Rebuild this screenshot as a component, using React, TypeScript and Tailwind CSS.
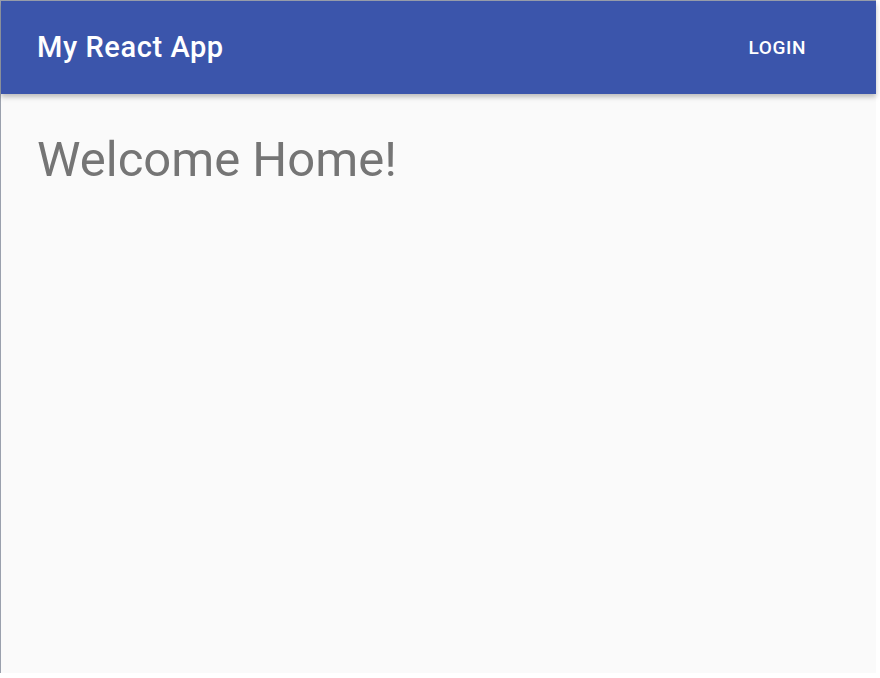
export default function App() {
  return (
    <div className="h-[678px] w-[880px] bg-white font-['Roboto',sans-serif]">
      <div className="flex h-[673px] w-[876px] flex-col border-l border-t border-[#9aa0ad] bg-[#fafafa]">
        <header className="relative z-10 flex h-[93px] shrink-0 items-center justify-between bg-[#3b55ab] pl-[36px] pr-[70px] shadow-[0_3px_5px_rgba(0,0,0,0.25)]">
          <h1 className="text-[29px] font-medium leading-none tracking-[0.02em] text-white">My React App</h1>
          <button className="text-[19px] font-medium uppercase leading-none tracking-[0.03em] text-white">Login</button>
        </header>
        <main className="px-[36px] pt-[41px]">
          <h2 className="text-[49px] font-normal leading-none text-[#757575]">Welcome Home!</h2>
        </main>
      </div>
    </div>
  );
}
